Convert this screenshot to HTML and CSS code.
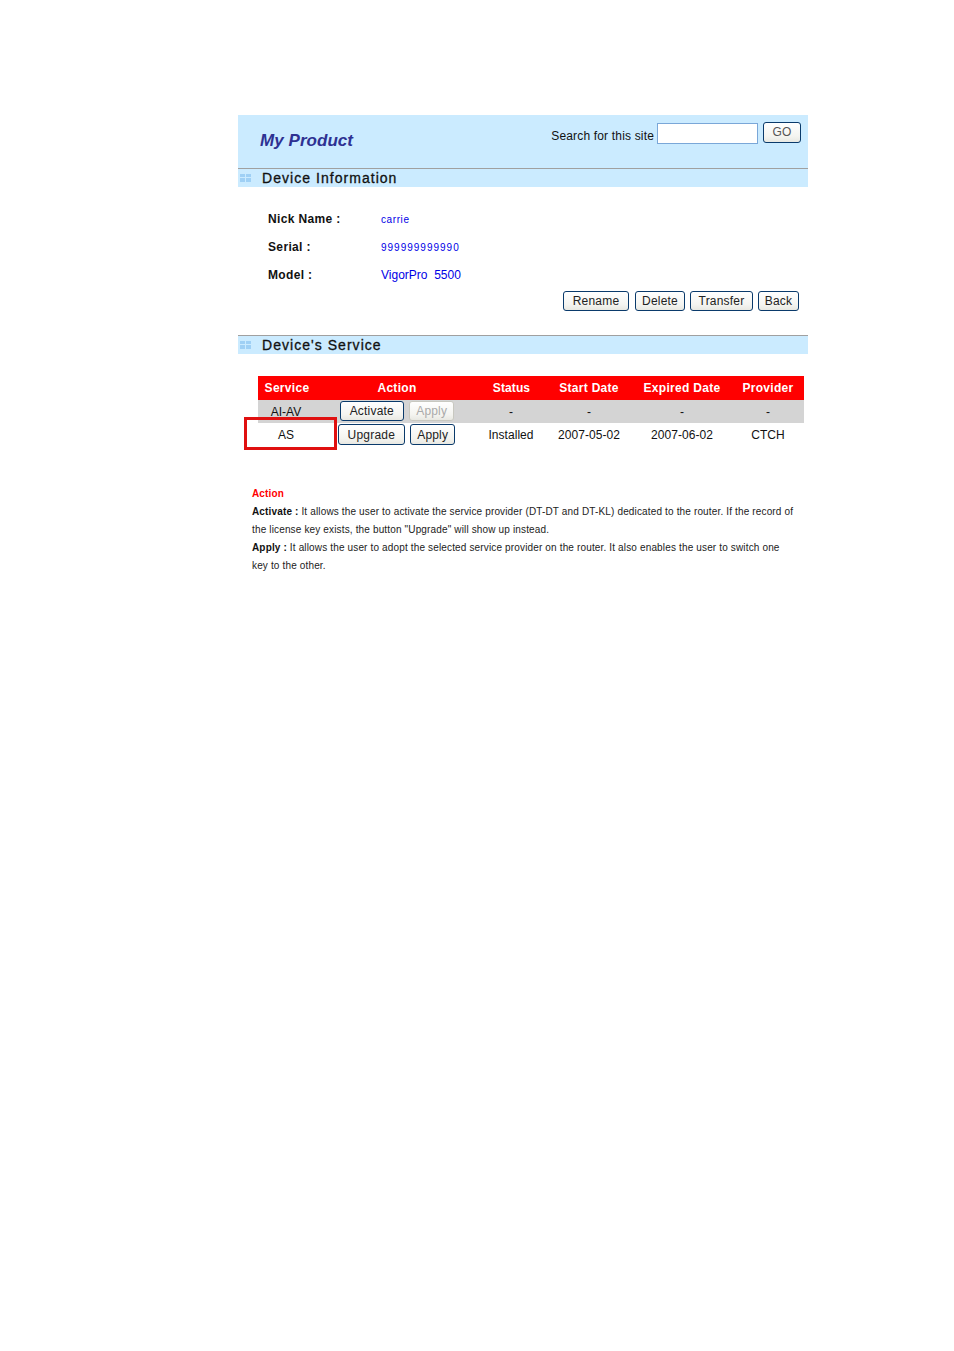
FILE: index.html
```html
<!DOCTYPE html>
<html lang="en">
<head>
	<meta charset="UTF-8">
	<title>My Product</title>

	<link rel="stylesheet" href="styles.css">
</head>
<body>

	<div class="box">
		<div class="top">
			<h1 class="logo">My Product</h1>
			<form class="search">
				<label for="q">Search for this site</label>
				<input type="text" id="q">
				<button type="button" class="btn gobtn">GO</button>
			</form>
		</div>

		<h2 class="bar">
			<svg width="11" height="8" viewBox="0 0 11 8"><path d="M0 0h5v3H0zM6 0h5v3H6zM0 4h5v4H0zM6 4h5v4H6z"/></svg>
			Device Information
		</h2>

		<dl class="info">
			<div class="row"><dt>Nick Name :</dt><dd>carrie</dd></div>
			<div class="row"><dt>Serial :</dt><dd class="num">999999999990</dd></div>
			<div class="row"><dt>Model :</dt><dd class="big">VigorPro&nbsp; 5500</dd></div>
		</dl>

		<div class="tools">
			<button type="button" class="btn rename">Rename</button>
			<button type="button" class="btn delete">Delete</button>
			<button type="button" class="btn transfer">Transfer</button>
			<button type="button" class="btn back">Back</button>
		</div>

		<h2 class="bar">
			<svg width="11" height="8" viewBox="0 0 11 8"><path d="M0 0h5v3H0zM6 0h5v3H6zM0 4h5v4H0zM6 4h5v4H6z"/></svg>
			Device's Service
		</h2>

		<table class="service">
			<colgroup>
				<col class="c1"><col class="c2"><col class="c3"><col class="c4"><col class="c5"><col class="c6">
			</colgroup>
			<tr>
				<th class="first">Service</th><th>Action</th><th class="stat">Status</th><th>Start Date</th><th>Expired Date</th><th class="prov">Provider</th>
			</tr>
			<tr class="gray">
				<td>AI-AV</td>
				<td>
					<button type="button" class="btn activate">Activate</button>
					<button type="button" class="btn off" disabled>Apply</button>
				</td>
				<td>-</td><td>-</td><td>-</td><td class="prov">-</td>
			</tr>
			<tr>
				<td class="mark">AS<span class="redbox"></span></td>
				<td>
					<button type="button" class="btn upgrade">Upgrade</button>
					<button type="button" class="btn apply">Apply</button>
				</td>
				<td>Installed</td><td>2007-05-02</td><td>2007-06-02</td><td class="prov">CTCH</td>
			</tr>
		</table>

		<div class="note">
			<p class="red">Action</p>
			<p><b>Activate :</b> It allows the user to activate the service provider (DT-DT and DT-KL) dedicated to the router. If the record of</p>
			<p>the license key exists, the button "Upgrade" will show up instead.</p>
			<p><b>Apply :</b> It allows the user to adopt the selected service provider on the router. It also enables the user to switch one</p>
			<p>key to the other.</p>
		</div>
	</div>

</body>
</html>
```

FILE: styles.css
```css
*{
	margin: 0;
	padding: 0;
	box-sizing: border-box;
}

body{
	background: #fff;
	font-family: "Liberation Sans", Arial, sans-serif;
	color: #111;
}

.box{
	width: 570px;
	margin: 115px 0 0 238px;
}

.top{
	height: 53px;
	background: #cbebff;
	display: flex;
	justify-content: space-between;
	align-items: flex-start;
	padding: 7px 7px 0 22px;
}

.logo{
	font-size: 17px;
	font-style: italic;
	font-weight: bold;
	color: #2e3192;
	line-height: 22px;
	margin-top: 8px;
	letter-spacing: 0.05px;
}

.search{
	display: flex;
	align-items: flex-start;
	font-size: 12px;
}

.search label{
	line-height: 14px;
	margin-top: 7px;
	margin-right: 3px;
	letter-spacing: 0.17px;
}

.search input{
	width: 101px;
	height: 21px;
	margin-top: 1px;
	background: #fff;
	border: 1px solid #7aa7d8;
	outline: none;
}

.btn{
	height: 20px;
	border: 1px solid #0a3a6b;
	border-radius: 3px;
	background: linear-gradient(#fff, #f4f4f0 70%, #e8e8e2);
	font-family: "Liberation Sans", Arial, sans-serif;
	font-size: 12px;
	color: #222;
	letter-spacing: 0.2px;
	padding: 0;
}

.gobtn{
	width: 38px;
	height: 21px;
	margin-left: 5px;
	padding-bottom: 2px;
	color: #555;
}

.bar{
	height: 19px;
	background: #cbebff;
	border-top: 1px solid #a0a0a0;
	display: flex;
	align-items: center;
	gap: 11px;
	padding-left: 2px;
	font-size: 14px;
	font-weight: normal;
	letter-spacing: 1.04px;
	color: #111;
	-webkit-text-stroke: 0.3px #111;
}

.bar svg{
	fill: #9fd0f5;
}

.info{
	padding: 18px 0 0 30px;
}

.row{
	display: flex;
	height: 28px;
	align-items: center;
}

.row dt{
	width: 113px;
	font-size: 12px;
	font-weight: bold;
	letter-spacing: 0.35px;
}

.row dd{
	font-size: 10px;
	color: #0000e6;
	letter-spacing: 0.6px;
}

.row dd.num{
	letter-spacing: 1px;
}

.row dd.big{
	font-size: 12px;
	letter-spacing: 0;
}

.tools{
	display: flex;
	justify-content: flex-end;
	gap: 5px;
	padding-right: 9px;
	margin-top: 2px;
	height: 44px;
}

.rename{ width: 66px; margin-right: 1px; }
.delete{ width: 50px; }
.transfer{ width: 63px; }
.back{ width: 41px; }

.service{
	width: 546px;
	margin: 22px 0 0 20px;
	border-collapse: collapse;
	table-layout: fixed;
	font-size: 12px;
	text-align: center;
}

.c1{ width: 56px; }
.c2{ width: 166px; }
.c3{ width: 62px; }
.c4{ width: 94px; }
.c5{ width: 92px; }
.c6{ width: 76px; }

.service th{
	height: 24px;
	background: #f00;
	color: #fff;
	font-size: 12px;
	letter-spacing: 0.3px;
	white-space: nowrap;
}

.service th.first{
	padding-left: 2px;
}

.service th.stat{
	padding-left: 1px;
	letter-spacing: 0.1px;
}

.service td{
	height: 23px;
	white-space: nowrap;
	letter-spacing: 0.05px;
}

.service .prov{
	padding-left: 4px;
}

.service tr.gray td{
	background: #d4d4d4;
}

.mark{
	position: relative;
}

/* 截图上的红色标注框 */
.redbox{
	position: absolute;
	left: -14px;
	top: -6px;
	width: 93px;
	height: 33px;
	border: 3px solid #e01010;
}

.service td .btn{
	vertical-align: middle;
}

.activate{ width: 64px; position: relative; top: -1px; }
.off{
	width: 45px;
	margin-left: 2px;
	color: #aaa;
	border-color: #c8c8c0;
	position: relative;
	top: -1px;
}
.upgrade{ width: 67px; height: 21px; margin-left: -1px; }
.apply{ width: 45px; height: 21px; margin-left: 2px; }

.note{
	margin: 39px 0 0 14px;
	font-size: 10px;
	line-height: 18px;
	color: #222;
	letter-spacing: 0.15px;
	white-space: nowrap;
}

.note b{
	color: #111;
}

.note .red{
	color: #f00;
	font-weight: bold;
}
```
